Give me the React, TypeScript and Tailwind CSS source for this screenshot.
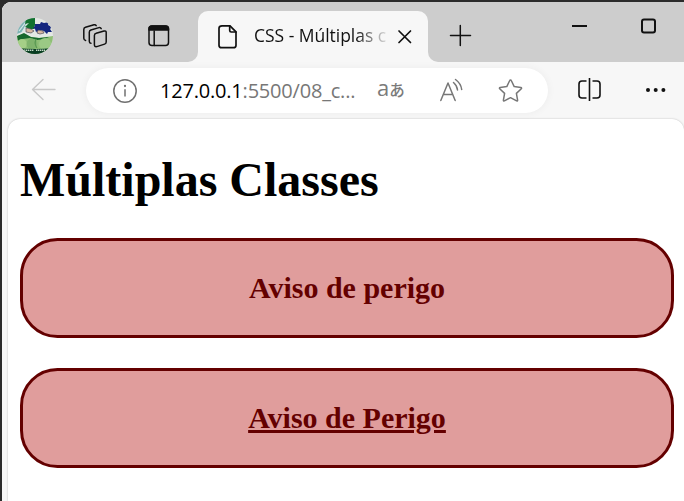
import type { ReactNode } from "react";

function Avatar() {
  return (
    <svg className="size-9 shrink-0" viewBox="0 0 36 36">
      <defs>
        <clipPath id="avatar"><circle cx="18" cy="18" r="18" /></clipPath>
      </defs>
      <g clipPath="url(#avatar)">
        <rect width="36" height="36" fill="#e4e8e4" />
        <path d="M0 0h12L5 14l-5 2z" fill="#7fb3b5" />
        <path d="M2 13l7-9M5 14l6-8" stroke="#d5e8e6" strokeWidth="1.2" />
        <path d="M9 0h9l0 7-1 4-4 0-5-2 4-4-4 1z" fill="#11702f" />
        <path d="M18 6l5 0 1-2 3 1 5-1-1 3 4 2-2 2 2 3-4 0-1 2-3-3-4-1-4 2-1-3-2-1 2-2z" fill="#14267f" />
        <path d="M9 10l5 1 3 2-3 2-5-1zM21 12l5 1 1 2-4 1-3-1z" fill="#d9b7a0" stroke="#3b3a4c" strokeWidth=".6" />
        <path d="M0 18l8-2 6 3 8 1 14-2v19H0z" fill="#8fbf76" />
        <path d="M0 18l7-3 7 4 8 1 10-1-4 2-8 1-7-2-7 1-5 2z" fill="#17682d" />
        <circle cx="5" cy="26" r="5" fill="#a5cf87" />
        <circle cx="15" cy="26" r="5.500" fill="#7fb36c" />
        <circle cx="28" cy="26" r="6" fill="#9bc985" />
        <path d="M20 21c-3 2-2 6 0 9" stroke="#4e914a" fill="none" />
        <path d="M0 30q18 2 36 0v6H0z" fill="#083c22" />
        <path d="M7 32.300h10m2 0h9" stroke="#c7dbc8" strokeWidth="1.400" strokeDasharray="1.400 .6" />
      </g>
    </svg>
  );
}

function Icon({ w, h, sw = 1.5, color = "#111", className = "", children }: {
  w: number; h: number; sw?: number; color?: string; className?: string; children: ReactNode;
}) {
  return (
    <svg width={w} height={h} viewBox={`0 0 ${w} ${h}`} fill="none" stroke={color} strokeWidth={sw}
      strokeLinecap="round" strokeLinejoin="round" className={`shrink-0 ${className}`}>
      {children}
    </svg>
  );
}

function TitleBar() {
  return (
    <div className="flex h-[60px] bg-[#f7f7f7]">
      <div className="flex w-[196px] shrink-0 items-start rounded-br-[10px] bg-[#cdcdcd] pl-[15px] pt-4">
        <Avatar />
        <Icon w={26} h={26} sw={1.5} className="ml-[29px] mt-[5px]">
          <path d="M14.200 10.300 22 8q2.200-.5 2.200 1.600v9.300q0 1.700-1.600 2.200l-7.800 2.500q-2.400.5-2.400-1.900v-9.300q0-1.700 1.800-2.100z" />
          <path d="M8.900 20.300q-1.600-.2-1.600-2V9.200q0-1.700 1.600-2.200l8.100-2.400q1.500-.4 2.200 1" />
          <path d="M3.600 17.400Q1.800 17 1.800 15.300V6.600q0-1.800 1.700-2.300l8.500-2.500q1.500-.4 2.200.9" />
        </Icon>
        <Icon w={24} h={24} className="ml-[39px] mt-[6px]">
          <rect x="2" y="2" width="19.500" height="19.500" rx="3" />
          <path d="M2 6V5q0-3 3-3h13.500q3 0 3 3v1z" fill="#111" />
          <path d="M7.200 7v14.500" />
        </Icon>
      </div>
      <div className="w-[230px] shrink-0 bg-[#cdcdcd] pt-[9px]">
        <div className="flex h-[51px] items-start rounded-t-[10px] bg-[#f7f7f7] pl-5 pt-[13px]">
          <Icon w={20} h={26} sw={1.700}>
            <path d="M4 1.800h8l6 6v13.400q0 2.500-2.500 2.500H3.500Q1 23.700 1 21.200V4.300Q1 1.800 4 1.800z" />
            <path d="M11.700 2v4.500q0 1.500 1.500 1.500H18" />
          </Icon>
          <div className="ml-4 mt-[-1px] w-[134px] whitespace-nowrap bg-[linear-gradient(90deg,#111_76%,#999_90%,#e0e0e0)] bg-clip-text font-['Open_Sans','Noto_Sans',sans-serif] text-[17.500px] leading-6 tracking-[-0.03px] text-transparent">
            CSS - Múltiplas c
          </div>
          <Icon w={16} h={16} sw={1.700} className="ml-[9px] mt-[5px]">
            <path d="m2 2 11.500 11.500M13.500 2 2 13.500" />
          </Icon>
        </div>
      </div>
      <div className="flex grow items-start rounded-bl-[10px] bg-[#cdcdcd] pl-[21px]">
        <Icon w={23} h={23} className="mt-[22px]"><path d="M11.300 1.500v20M1.500 11.500h20" /></Icon>
        <Icon w={17} h={4} sw={2} className="ml-[99px] mt-[22px]"><path d="M1 2h15" strokeLinecap="butt" /></Icon>
        <Icon w={17} h={17} sw={2} className="ml-[52px] mt-[16px]"><rect x="2" y="1.500" width="13" height="13" rx="2" /></Icon>
      </div>
    </div>
  );
}

function Toolbar() {
  return (
    <div className="flex h-[57px] items-start bg-[#f7f7f7] pl-[28px] pt-[6px]">
      <Icon w={27} h={24} sw={1.400} color="#c8c8c8" className="mt-[9px]">
        <path d="M25 12.500H2.500M13 2.500l-10.500 10 10.500 10" />
      </Icon>
      <div className="ml-[29px] flex h-[45px] w-[462px] shrink-0 items-center rounded-full bg-white shadow-[0_0_8px_rgba(0,0,0,0.05)]">
        <Icon w={26} h={26} sw={1.500} color="#707070" className="ml-[26px] mt-px">
          <circle cx="13" cy="13" r="11.200" />
          <path d="M13 11.300v7.200" strokeLinecap="butt" />
          <circle cx="13" cy="8" r=".4" fill="#707070" />
        </Icon>
        <div className="ml-[22px] w-[200px] shrink-0 whitespace-nowrap font-['Open_Sans','Noto_Sans',sans-serif] text-[20px] tracking-[-0.2px] text-[#777]">
          <span className="text-black">127.0.0.1</span>:5500/08_c...
        </div>
        <div className="ml-[17px] mt-[-4px] flex w-[30px] shrink-0 items-baseline whitespace-nowrap font-['Open_Sans','Noto_Sans_CJK_JP',sans-serif] text-[22px] leading-6 text-[#7b7b7b]">
          <span>a</span><span className="text-[15.500px] font-medium">あ</span>
        </div>
        <Icon w={25} h={25} sw={1.500} color="#777" className="ml-[32px]">
          <path d="M1.800 22.500 9 5l7.200 17.500M4.300 16.500h9.400" />
          <path d="M14.500 4.500q3.500 3 4 7.500M16.500 1.500q5.500 4 6.200 10" />
        </Icon>
        <Icon w={26} h={26} sw={1.500} color="#777" className="ml-[33px] mt-px">
          <path d="M13.500 2q.6 0 .9.700l2.800 5.900 6.600.9q1.200.3.500 1.300l-4.900 4.600 1.200 6.700q.1 1.200-1 .8L13.500 19.700l-6.100 3.200q-1.100.4-1-.8l1.200-6.700-4.900-4.600q-.7-1 .5-1.300l6.600-.9 2.800-5.900q.3-.7.900-.7z" />
        </Icon>
      </div>
      <Icon w={26} h={26} sw={1.600} className="ml-[29px] mt-[9px]">
        <path d="M9.500 4H5Q2 4 2 7v11q0 3 3 3h4.500M15.500 4h4.500q3 0 3 3v11q0 3-3 3h-4.500M12.500 1v23" strokeLinecap="butt" />
      </Icon>
      <svg width="21" height="6" viewBox="0 0 21 6" fill="#111" className="ml-[43px] mt-[19px] shrink-0">
        <circle cx="2" cy="3" r="2" /><circle cx="9.700" cy="3" r="2" /><circle cx="17.400" cy="3" r="2" />
      </svg>
    </div>
  );
}

function Warning({ children, underlined = false }: { children: ReactNode; underlined?: boolean }) {
  return (
    <p className={`mb-[30px] flex h-[100px] items-center justify-center rounded-[37.5px] border-3 border-[#640000] bg-[#e09d9c] pb-[2px] font-['Liberation_Serif',serif] text-[30px] font-bold text-[#640000] ${underlined ? "underline decoration-[3px] underline-offset-[2px]" : ""}`}>
      {children}
    </p>
  );
}

export default function App() {
  return (
    <div className="h-[501px] w-[684px] overflow-hidden bg-[#2b2b2b] pl-0.5 pt-0.5">
      <div className="flex h-[499px] flex-col overflow-hidden rounded-tl-[9px] bg-[#f7f7f7]">
        <TitleBar />
        <Toolbar />
        <main className="ml-[6px] grow rounded-t-xl bg-white pl-3 pr-[10px] shadow-[0_0_2px_rgba(0,0,0,0.25)]">
          <h1 className="mb-[31px] mt-[33px] h-[55px] font-['Liberation_Serif',serif] text-[48px] font-bold leading-[55px] text-black">
            Múltiplas Classes
          </h1>
          <Warning>Aviso de perigo</Warning>
          <Warning underlined>Aviso de Perigo</Warning>
        </main>
      </div>
    </div>
  );
}
